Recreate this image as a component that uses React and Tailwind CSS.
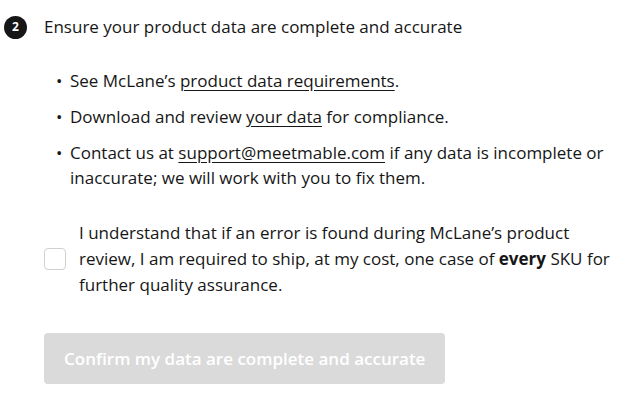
import React, { useState } from "react";

export default function App() {
  const [checked, setChecked] = useState(false);

  return (
    <div className="w-[642px] h-[402px] bg-white text-[#161616] font-['Open_Sans',sans-serif] text-[17px] leading-[26px] overflow-hidden">
      <div className="pl-[4px] pr-[20px] pt-[14px]">
        {/* step header */}
        <div className="flex items-center gap-[17px]">
          <div className="w-[23px] h-[23px] rounded-full bg-[#161616] text-white text-[12px] font-bold flex items-center justify-center leading-none">2</div>
          <h2 className="font-normal">Ensure your product data are complete and accurate</h2>
        </div>

        <div className="pl-[40px]">
          <ul className="mt-[28px] flex flex-col gap-[11px] leading-[25px]">
            <li className="flex">
              <span className="w-[26px] pl-[12px] shrink-0">•</span>
              <span>See McLane’s <a className="underline underline-offset-[3px]">product data requirements</a>.</span>
            </li>
            <li className="flex">
              <span className="w-[26px] pl-[12px] shrink-0">•</span>
              <span>Download and review <a className="underline underline-offset-[3px]">your data</a> for compliance.</span>
            </li>
            <li className="flex">
              <span className="w-[26px] pl-[12px] shrink-0">•</span>
              <span>Contact us at <a className="underline underline-offset-[3px]">support@meetmable.com</a> if any data is incomplete or inaccurate; we will work with you to fix them.</span>
            </li>
          </ul>

          <label className="mt-[30px] flex items-center gap-[13px] cursor-pointer">
            <input
              type="checkbox"
              checked={checked}
              onChange={() => setChecked(!checked)}
              className="appearance-none w-[22px] h-[22px] shrink-0 rounded-[4px] border border-[#d0d0d0] bg-white"
            />
            <span>
              I understand that if an error is found during McLane’s product review, I am required to ship, at my cost, one case of <b className="font-bold">every</b> SKU for further quality assurance.
            </span>
          </label>

          <button
            disabled={!checked}
            className="mt-[35px] h-[51px] px-[20px] rounded-[4px] bg-[#dadada] text-white font-semibold text-[17px]"
          >
            Confirm my data are complete and accurate
          </button>
        </div>
      </div>
    </div>
  );
}
